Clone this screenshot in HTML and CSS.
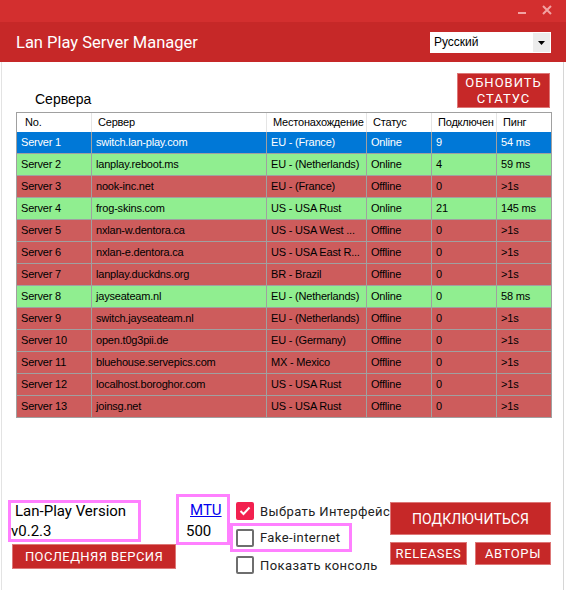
FILE: index.html
```html
<!DOCTYPE html>
<html lang="ru">
<head>
<meta charset="utf-8">
<title>Lan Play Server Manager</title>
<link rel="stylesheet" href="styles.css">
</head>
<body>
<div class="app">
  <div class="titlebar">
    <span class="min"></span>
    <svg class="close" width="10" height="10" viewBox="0 0 10 10"><path d="M1 1L9 9M9 1L1 9" stroke="#f2a3a3" stroke-width="2" fill="none"/></svg>
  </div>
  <div class="header">
    <div class="title">Lan Play Server Manager</div>
    <div class="select">
      <span class="select-text">Русский</span>
      <span class="select-arrow"><svg width="7" height="4" viewBox="0 0 7 4"><path d="M0 0H7L3.5 4Z" fill="#000"/></svg></span>
    </div>
  </div>
  <div class="main">
    <div class="toolbar">
      <div class="section-label">Сервера</div>
      <button class="btn btn-refresh">ОБНОВИТЬ<br>СТАТУС</button>
    </div>
    <div class="grid">
      <div class="row head">
        <div class="cell">No.</div><div class="cell">Сервер</div><div class="cell">Местонахождение</div><div class="cell">Статус</div><div class="cell">Подключен</div><div class="cell">Пинг</div>
      </div>
      <div class="row sel"><div class="cell">Server 1</div><div class="cell">switch.lan-play.com</div><div class="cell">EU - (France)</div><div class="cell">Online</div><div class="cell">9</div><div class="cell">54 ms</div></div>
      <div class="row on"><div class="cell">Server 2</div><div class="cell">lanplay.reboot.ms</div><div class="cell">EU - (Netherlands)</div><div class="cell">Online</div><div class="cell">4</div><div class="cell">59 ms</div></div>
      <div class="row off"><div class="cell">Server 3</div><div class="cell">nook-inc.net</div><div class="cell">EU - (France)</div><div class="cell">Offline</div><div class="cell">0</div><div class="cell">&gt;1s</div></div>
      <div class="row on"><div class="cell">Server 4</div><div class="cell">frog-skins.com</div><div class="cell">US - USA Rust</div><div class="cell">Online</div><div class="cell">21</div><div class="cell">145 ms</div></div>
      <div class="row off"><div class="cell">Server 5</div><div class="cell">nxlan-w.dentora.ca</div><div class="cell">US - USA West ...</div><div class="cell">Offline</div><div class="cell">0</div><div class="cell">&gt;1s</div></div>
      <div class="row off"><div class="cell">Server 6</div><div class="cell">nxlan-e.dentora.ca</div><div class="cell">US - USA East R...</div><div class="cell">Offline</div><div class="cell">0</div><div class="cell">&gt;1s</div></div>
      <div class="row off"><div class="cell">Server 7</div><div class="cell">lanplay.duckdns.org</div><div class="cell">BR - Brazil</div><div class="cell">Offline</div><div class="cell">0</div><div class="cell">&gt;1s</div></div>
      <div class="row on"><div class="cell">Server 8</div><div class="cell">jayseateam.nl</div><div class="cell">EU - (Netherlands)</div><div class="cell">Online</div><div class="cell">0</div><div class="cell">58 ms</div></div>
      <div class="row off"><div class="cell">Server 9</div><div class="cell">switch.jayseateam.nl</div><div class="cell">EU - (Netherlands)</div><div class="cell">Offline</div><div class="cell">0</div><div class="cell">&gt;1s</div></div>
      <div class="row off"><div class="cell">Server 10</div><div class="cell">open.t0g3pii.de</div><div class="cell">EU - (Germany)</div><div class="cell">Offline</div><div class="cell">0</div><div class="cell">&gt;1s</div></div>
      <div class="row off"><div class="cell">Server 11</div><div class="cell">bluehouse.servepics.com</div><div class="cell">MX - Mexico</div><div class="cell">Offline</div><div class="cell">0</div><div class="cell">&gt;1s</div></div>
      <div class="row off"><div class="cell">Server 12</div><div class="cell">localhost.boroghor.com</div><div class="cell">US - USA Rust</div><div class="cell">Offline</div><div class="cell">0</div><div class="cell">&gt;1s</div></div>
      <div class="row off"><div class="cell">Server 13</div><div class="cell">joinsg.net</div><div class="cell">US - USA Rust</div><div class="cell">Offline</div><div class="cell">0</div><div class="cell">&gt;1s</div></div>
    </div>
    <div class="bottom">
      <div class="ver-col">
        <div class="ver-box">
          <div class="ver-text"><div class="ver-l1">Lan-Play Version</div><div>v0.2.3</div></div>
        </div>
        <button class="btn btn-latest">ПОСЛЕДНЯЯ ВЕРСИЯ</button>
      </div>
      <div class="mtu-box">
        <a class="mtu-link" href="#">MTU</a>
        <div class="mtu-val">500</div>
      </div>
      <div class="check-col">
        <div class="check-row">
          <span class="cb checked"><svg width="12" height="10" viewBox="0 0 12 10"><path d="M1.5 5L4.5 8L10.5 1.5" stroke="#fff" stroke-width="2" fill="none"/></svg></span>
          <span class="cb-label">Выбрать Интерфейс</span>
        </div>
        <div class="check-row boxed">
          <span class="cb"></span>
          <span class="cb-label">Fake-internet</span>
        </div>
        <div class="check-row last">
          <span class="cb"></span>
          <span class="cb-label">Показать консоль</span>
        </div>
      </div>
      <div class="btn-col">
        <button class="btn btn-connect">ПОДКЛЮЧИТЬСЯ</button>
        <div class="btn-pair">
          <button class="btn btn-small btn-releases">RELEASES</button>
          <button class="btn btn-small btn-authors">АВТОРЫ</button>
        </div>
      </div>
    </div>
  </div>
</div>
</body>
</html>
```

FILE: styles.css
```css
* { box-sizing: border-box; }
html, body { margin: 0; padding: 0; }
body {
  width: 566px;
  height: 590px;
  overflow: hidden;
  background: #fff;
  font-family: Roboto, "Liberation Sans", sans-serif;
}
.app { width: 566px; height: 590px; display: flex; flex-direction: column; }

.titlebar {
  height: 22px;
  background: #d32f2f;
  display: flex;
  align-items: center;
  justify-content: flex-end;
  padding-right: 14px;
}
.min {
  width: 8px;
  height: 2px;
  background: #f2a3a3;
  margin-right: 16px;
  margin-top: 3px;
}
.close { display: block; margin-top: -2px; }

.header {
  height: 40px;
  background: #c62828;
  display: flex;
  align-items: center;
  justify-content: space-between;
  padding: 0 15px 0 16px;
}
.title {
  color: #fff;
  font-size: 16.5px;
  letter-spacing: 0;
  margin-top: 1px;
}
.select {
  width: 121px;
  height: 21px;
  background: #fff;
  display: flex;
  align-items: stretch;
  margin-top: 1px;
}
.select-text {
  flex: 1;
  font-family: "Liberation Sans", sans-serif;
  font-size: 12px;
  line-height: 21px;
  padding-left: 4px;
  color: #000;
}
.select-arrow {
  width: 17px;
  margin: 1px;
  background: #ececec;
  display: flex;
  align-items: center;
  justify-content: center;
}
.select-arrow svg { display: block; }

.main {
  flex: 1;
  margin-left: 1px;
  width: 563px;
  border-left: 1px solid #e3e3e3;
  border-right: 1px solid #d6d6d6;
}

.toolbar {
  height: 50px;
  display: flex;
  justify-content: space-between;
  align-items: flex-start;
}
.section-label {
  align-self: flex-end;
  margin: 0 0 5px 33px;
  font-family: "Liberation Sans", sans-serif;
  font-size: 14px;
  color: #000;
}
.btn {
  border: 1px solid #dd7777;
  background: #c62828;
  color: #fff;
  font-family: Roboto, "Liberation Sans", sans-serif;
  font-weight: 400;
  padding: 0;
  margin: 0;
  letter-spacing: 1px;
  cursor: pointer;
}
.btn-refresh {
  margin: 11px 13px 0 0;
  width: 93px;
  height: 35px;
  font-size: 13px;
  line-height: 16px;
}

.grid {
  margin-left: 14px;
  width: 536px;
  border-left: 1px solid #a0a0a0;
  border-top: 1px solid #a0a0a0;
  font-family: "Liberation Sans", sans-serif;
  font-size: 11px;
  letter-spacing: -0.2px;
}
.row {
  display: grid;
  grid-template-columns: 75px 175px 100px 65px 65px 55px;
  height: 22px;
  border-bottom: 1px solid #a0a0a0;
}
.cell {
  border-right: 1px solid #a0a0a0;
  padding-left: 4px;
  line-height: 21px;
  white-space: nowrap;
  overflow: hidden;
  color: #000;
}
.row.head {
  height: 19px;
  border-bottom: none;
  background: #fff;
}
.row.head .cell {
  border-right: 1px solid #e5e5e5;
  padding-left: 6px;
  line-height: 19px;
}
.row.head .cell:first-child { padding-left: 8px; }
.row.head .cell:last-child { border-right: 1px solid #a0a0a0; }
.row.sel { background: #0078d7; }
.row.sel .cell { color: #fff; }
.row.on { background: #90ee90; }
.row.off { background: #cd5c5c; }

.bottom {
  margin-top: 76px;
  display: flex;
  align-items: flex-start;
  padding-left: 6px;
}
.ver-col { width: 168px; }
.ver-box {
  margin-top: 6px;
  width: 133px;
  height: 42px;
  border: 3px solid #ff80ff;
  font-size: 15px;
  line-height: 20px;
  color: #000;
}
.ver-text { margin-top: -2px; }
.ver-l1 { padding-left: 4px; }
.btn-latest {
  display: block;
  margin: 2px 0 0 4px;
  width: 164px;
  height: 25px;
  font-size: 13px;
  letter-spacing: 0.4px;
}

.mtu-box {
  width: 54px;
  height: 51px;
  border: 3px solid #ff80ff;
  font-size: 15px;
  line-height: 20px;
  padding-top: 3px;
}
.mtu-link {
  display: block;
  color: #0000ee;
  text-decoration: underline;
  padding-left: 11px;
}
.mtu-val { padding-left: 7px; margin-top: 1px; }

.check-col {
  width: 160px;
  padding-top: 8px;
  overflow: hidden;
  white-space: nowrap;
}
.check-row {
  display: flex;
  align-items: center;
  height: 18px;
  padding-left: 6px;
}
.check-row.boxed {
  margin-top: 3px;
  width: 122px;
  height: 29px;
  border: 3px solid #ff80ff;
  padding-left: 3px;
}
.check-row.last { margin-top: 4px; }
.cb {
  flex: none;
  width: 18px;
  height: 18px;
  border: 2px solid #6e6e6e;
  border-radius: 2px;
  display: flex;
  align-items: center;
  justify-content: center;
}
.cb.checked {
  background: #f2214f;
  border-color: #f2214f;
}
.cb svg { display: block; }
.cb-label {
  margin-left: 6px;
  font-size: 13px;
  letter-spacing: 0.4px;
  color: #222;
}

.btn-col {
  width: 161px;
  padding-top: 8px;
}
.btn-connect {
  display: block;
  width: 161px;
  height: 33px;
  font-size: 14px;
  letter-spacing: 0.1px;
}
.btn-pair {
  margin-top: 7px;
  display: flex;
  gap: 8px;
}
.btn-small {
  height: 23px;
  font-size: 13px;
  letter-spacing: 0.6px;
}
.btn-releases { width: 77px; }
.btn-authors { width: 76px; }
```
